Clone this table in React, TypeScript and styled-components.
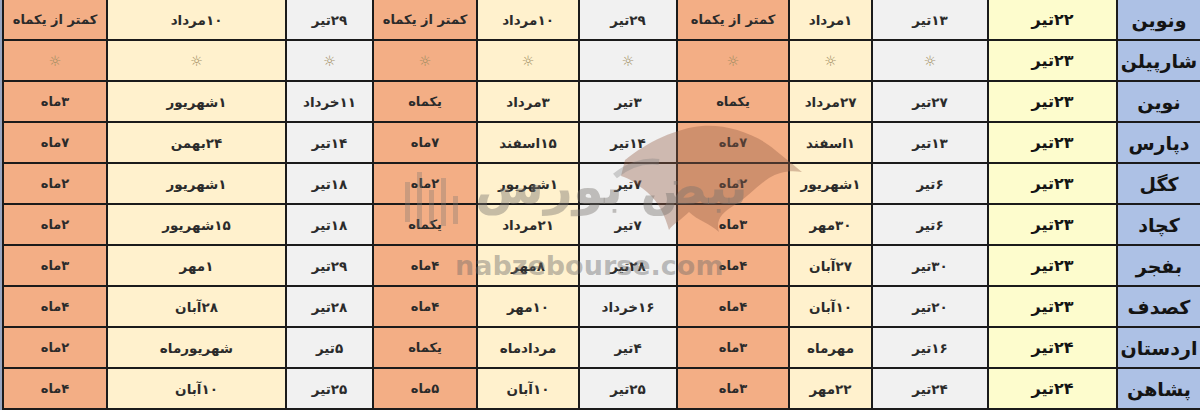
import React from 'react';
import styled, { createGlobalStyle } from 'styled-components';

const GlobalStyle = createGlobalStyle`
  html, body {
    margin: 0;
    padding: 0;
    background: #9aa6c0;
    overflow: hidden;
  }
`;

type Kind = 'name' | 'date' | 'gray' | 'cream' | 'orange';

const colors: Record<Kind, string> = {
  name: '#adc1e5',
  date: '#fdfccd',
  gray: '#f1f1f1',
  cream: '#fff1cd',
  orange: '#f3ae85',
};

const sizes: Record<Kind, string> = {
  name: '19px',
  date: '16px',
  gray: '13.5px',
  cream: '13.5px',
  orange: '13px',
};

const Wrap = styled.div`
  position: relative;
  width: 1198px;
  height: 410px;
  margin-left: 2px;
  overflow: hidden;
`;

const Table = styled.div`
  direction: rtl;
  display: grid;
  grid-template-columns: 82px 127px 114px 81px 110px 96px 100px 102px 85px 177px 102px;
  grid-auto-rows: 39px;
  gap: 2px;
  border-left: 2px solid #1b1b1b;
  background: #1b1b1b;
  padding-bottom: 2px;
  font-family: 'DejaVu Sans', sans-serif;
`;

const Cell = styled.div<{ $kind: Kind }>`
  display: flex;
  align-items: center;
  justify-content: center;
  background: ${(p) => colors[p.$kind]};
  color: ${(p) => (p.$kind === 'name' || p.$kind === 'date' ? '#141414' : '#2b2b2b')};
  font-size: ${(p) => sizes[p.$kind]};
  font-weight: bold;
  white-space: nowrap;
`;

const Star = styled.span`
  font-size: 14px;
  color: #a08c60;
  font-weight: normal;
`;

const Watermark = styled.div`
  position: absolute;
  left: 395px;
  top: 120px;
  width: 410px;
  height: 170px;
  pointer-events: none;
`;

const LogoText = styled.div`
  position: absolute;
  left: 78px;
  top: 38px;
  direction: rtl;
  font-family: 'DejaVu Sans', sans-serif;
  font-weight: bold;
  font-size: 50px;
  color: rgba(120, 115, 110, 0.42);
  letter-spacing: -2px;
`;

const Site = styled.div`
  position: absolute;
  left: 58px;
  top: 130px;
  font-family: 'DejaVu Sans', sans-serif;
  font-size: 27px;
  font-weight: bold;
  color: rgba(105, 105, 105, 0.42);
`;

const Bull = styled.svg`
  position: absolute;
  left: 0;
  top: 0;
`;

const rows: string[][] = [
  ['ونوین', '۲۲تیر', '۱۳تیر', '۱مرداد', 'کمتر از یکماه', '۲۹تیر', '۱۰مرداد', 'کمتر از یکماه', '۲۹تیر', '۱۰مرداد', 'کمتر از یکماه'],
  ['شارپیلن', '۲۳تیر', '*', '*', '*', '*', '*', '*', '*', '*', '*'],
  ['نوین', '۲۳تیر', '۲۷تیر', '۲۷مرداد', 'یکماه', '۳تیر', '۳مرداد', 'یکماه', '۱۱خرداد', '۱شهریور', '۳ماه'],
  ['دپارس', '۲۳تیر', '۱۳تیر', '۱اسفند', '۷ماه', '۱۴تیر', '۱۵اسفند', '۷ماه', '۱۴تیر', '۲۴بهمن', '۷ماه'],
  ['کگل', '۲۳تیر', '۶تیر', '۱شهریور', '۲ماه', '۷تیر', '۱شهریور', '۲ماه', '۱۸تیر', '۱شهریور', '۲ماه'],
  ['کچاد', '۲۳تیر', '۶تیر', '۳۰مهر', '۳ماه', '۷تیر', '۲۱مرداد', 'یکماه', '۱۸تیر', '۱۵شهریور', '۲ماه'],
  ['بفجر', '۲۳تیر', '۳۰تیر', '۲۷آبان', '۴ماه', '۲۸تیر', '۸مهر', '۴ماه', '۲۹تیر', '۱مهر', '۳ماه'],
  ['کصدف', '۲۳تیر', '۲۰تیر', '۱۰آبان', '۴ماه', '۱۶خرداد', '۱۰مهر', '۴ماه', '۲۸تیر', '۲۸آبان', '۴ماه'],
  ['اردستان', '۲۴تیر', '۱۶تیر', 'مهرماه', '۳ماه', '۴تیر', 'مردادماه', 'یکماه', '۵تیر', 'شهریورماه', '۲ماه'],
  ['پشاهن', '۲۴تیر', '۲۴تیر', '۲۲مهر', '۳ماه', '۲۵تیر', '۱۰آبان', '۵ماه', '۲۵تیر', '۱۰آبان', '۴ماه'],
];

const kinds: Kind[] = ['name', 'date', 'gray', 'cream', 'orange', 'gray', 'cream', 'orange', 'gray', 'cream', 'orange'];

export default function App() {
  return (
    <>
      <GlobalStyle />
      <Wrap>
        <Table>
          {rows.map((row, r) =>
            row.map((text, c) => (
              <Cell key={`${r}-${c}`} $kind={kinds[c]}>
                {text === '*' ? <Star>☼</Star> : text}
              </Cell>
            ))
          )}
        </Table>
        <Watermark>
          <Bull width="410" height="170" viewBox="0 0 410 170">
            {/* bull head */}
            <path
              d="M228 40 C250 22 280 8 305 6 C330 4 360 14 378 30 C388 38 398 46 405 52 C392 50 382 52 372 58 C360 66 350 78 336 86 C326 92 318 100 322 112 C314 104 300 100 292 92 C284 100 276 104 272 110 C268 96 262 82 250 72 C240 64 232 58 224 56 Z"
              fill="rgba(150, 95, 70, 0.38)"
            />
            <path d="M262 42 C246 40 230 46 218 56" stroke="rgba(130,130,130,0.35)" strokeWidth="6" fill="none" />
            {/* candle bars */}
            <rect x="8" y="62" width="5" height="40" fill="rgba(130,120,115,0.35)" />
            <rect x="20" y="52" width="5" height="56" fill="rgba(130,120,115,0.35)" />
            <rect x="32" y="70" width="5" height="34" fill="rgba(130,120,115,0.35)" />
            <rect x="44" y="58" width="5" height="48" fill="rgba(130,120,115,0.35)" />
            <rect x="56" y="76" width="5" height="28" fill="rgba(130,120,115,0.35)" />
          </Bull>
          <LogoText>نبض بورس</LogoText>
          <Site>nabzebourse.com</Site>
        </Watermark>
      </Wrap>
    </>
  );
}
